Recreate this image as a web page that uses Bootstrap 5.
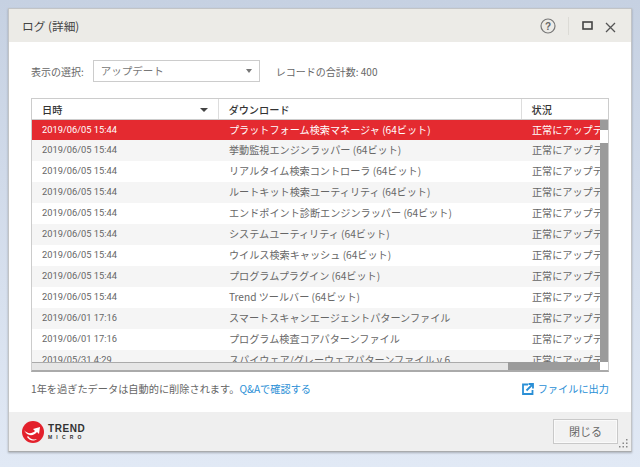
<!DOCTYPE html>
<html lang="ja">
<head>
  <meta charset="UTF-8" />
  <meta name="viewport" content="width=device-width, initial-scale=1" />
  <title>ログ (詳細)</title>
  <link href="https://cdn.jsdelivr.net/npm/bootstrap@5.3.3/dist/css/bootstrap.min.css" rel="stylesheet" />
  <style>
    html, body { height: 467px; overflow: hidden; }
    body { background: linear-gradient(#c6d1e2, #e1e9f5); font-family: "Noto Sans CJK JP", sans-serif; font-size: 10.200px; color: #666; padding: 8px 8px 15px; }
    .log-window { height: 444px; background: #fff; border: 1px solid #c2c4c6; border-bottom-color: #a9abad; box-shadow: 0 1px 2px rgba(0,0,0,.25); position: relative; }
    .log-head { height: 33px; background: #ecebe7; padding-left: 13px; padding-right: 15px; }
    .log-title { font-size: 11.700px; color: #444; }
    .tool-sep { width: 1px; height: 18px; background: #dcdbd6; margin: 0 13px 0 12px; }
    .tool-max { margin-right: 12px; }
    .tool-close { margin-top: 4px; }
    .log-body { padding: 18px 22px 0 22px; }
    .filter-row { height: 22px; margin-bottom: 16px; font-size: 10px; }
    .picker { width: 167px; height: 22px; border: 1px solid #ccc; padding: 0 7px; margin: 0 16px 0 9px; color: #777; font-size: 10.500px; }
    .caret-down { width: 0; height: 0; border-left: 4px solid transparent; border-right: 4px solid transparent; border-top: 4px solid #444; }
    .picker .caret-down { border-left-width: 3px; border-right-width: 3px; border-top-color: #777; }
    .grid-box { width: 578px; height: 274px; border: 1px solid #ccc; border-bottom: 2px solid #aaa; position: relative; overflow: hidden; }
    .grid-box table { width: 586px; table-layout: fixed; margin: 0; }
    .grid-box th, .grid-box td { height: 21px; padding: 0 0 0 10px; font-size: 10.150px; line-height: 20px; white-space: nowrap; overflow: hidden; border: 0; font-weight: 400; color: #666; }
    .grid-box td + td { padding-left: 11px; }
    .grid-box thead th { color: #333; font-size: 10.200px; font-weight: 500; background: #fff; height: 20px; line-height: 18px; border-bottom: 1px solid #ccc; }
    .grid-box thead th + th { border-left: 1px solid #ddd; padding-left: 10px; }
    .grid-box tbody tr:nth-child(even) td { background: #f5f5f5; }
    .grid-box tbody tr.picked td { background: #e42a30; color: #fff; }
    .grid-box thead th.sort-cell { padding-right: 10px; }
    .grid-box td.num { font-family: Roboto, "Noto Sans CJK JP", sans-serif; font-size: 9.300px; }
    .v-bar { position: absolute; top: 21px; right: 0; width: 8px; bottom: 0; background: #9b9b9b; }
    .v-thumb { height: 13px; margin-top: 10px; background: #fff; }
    .h-bar { position: absolute; left: 0; right: 8px; bottom: 0; height: 8px; background: #e6e6e6; border-top: 1px solid #aaa; }
    .h-thumb { position: absolute; right: 0; top: -1px; bottom: 0; width: 92px; background: #9b9b9b; }
    .corner { position: absolute; right: 0; bottom: 0; width: 8px; height: 8px; background: #fff; }
    .note-row { margin-top: 9px; }
    .note-row a { color: #2a8fd6; text-decoration: none; }
    .log-foot { position: absolute; left: 0; right: 0; bottom: 0; height: 39px; background: #efefef; padding: 0 13px; }
    .brand-word { line-height: 1; color: #333; font-family: "Liberation Sans", sans-serif; font-weight: 700; }
    .brand-word b { display: block; font-size: 10px; letter-spacing: .6px; }
    .brand-word i { display: block; font-style: normal; font-size: 5px; letter-spacing: 4.200px; margin-top: 1px; }
    .close-btn { width: 65px; height: 25px; padding: 0; border: 1px solid #c9c9c9; border-radius: 0; background: #f2f2f2; color: #666; font-size: 11px; box-shadow: inset 0 0 0 1px #fafafa; }
    .grip { position: absolute; right: 3px; bottom: 3px; }
  </style>
</head>
<body>
  <div class="log-window d-flex flex-column">
    <div class="log-head d-flex align-items-center justify-content-between">
      <span class="log-title">ログ (詳細)</span>
      <div class="d-flex align-items-center">
        <svg width="16" height="16" viewBox="0 0 16 16"><circle cx="8" cy="8" r="7" fill="none" stroke="#777" stroke-width="1.2"/><text x="8" y="11.5" text-anchor="middle" font-size="10" font-weight="700" font-family="Liberation Sans" fill="#666">?</text></svg>
        <span class="tool-sep"></span>
        <svg class="tool-max" width="11" height="9" viewBox="0 0 11 9"><rect x="1" y="1" width="9" height="7" fill="none" stroke="#444" stroke-width="1.6"/></svg>
        <svg class="tool-close" width="11" height="11" viewBox="0 0 11 11"><path d="M1 1l9 9M10 1l-9 9" stroke="#555" stroke-width="1.3" fill="none"/></svg>
      </div>
    </div>

    <div class="log-body">
      <div class="filter-row d-flex align-items-center">
        <span>表示の選択:</span>
        <div class="picker d-flex align-items-center justify-content-between">
          <span>アップデート</span>
          <span class="caret-down"></span>
        </div>
        <span>レコードの合計数: 400</span>
      </div>

      <div class="grid-box">
        <table class="table" id="logTable">
          <colgroup><col style="width:186px" /><col style="width:303px" /><col style="width:97px" /></colgroup>
          <thead>
            <tr>
              <th class="sort-cell"><div class="d-flex align-items-center justify-content-between"><span>日時</span><span class="caret-down"></span></div></th>
              <th>ダウンロード</th>
              <th>状況</th>
            </tr>
          </thead>
          <tbody id="logRows"></tbody>
        </table>
        <div class="v-bar"><div class="v-thumb"></div></div>
        <div class="h-bar"><div class="h-thumb"></div></div>
        <div class="corner"></div>
      </div>

      <div class="note-row d-flex justify-content-between align-items-center">
        <span>1年を過ぎたデータは自動的に削除されます。<a href="#">Q&amp;Aで確認する</a></span>
        <a href="#" class="d-flex align-items-center gap-1">
          <svg width="12" height="12" viewBox="0 0 12 12"><path d="M6 1.500H1V11h9.500V7" fill="none" stroke="#2a8fd6" stroke-width="1.800"/><path d="M4.500 7.500L10 2M6.500 1h4.500v4.500" fill="none" stroke="#2a8fd6" stroke-width="1.800"/></svg>
          ファイルに出力
        </a>
      </div>
    </div>

    <div class="log-foot d-flex align-items-center justify-content-between">
      <div class="d-flex align-items-center gap-1">
        <svg width="22" height="22" viewBox="0 0 22 22">
          <circle cx="11" cy="11" r="11" fill="#e3202b"/>
          <path d="M2 9c3 4 8 4 11 1l-2-2 7-2-1 7-2-2c-3 4-10 5-13-2z" fill="#fff"/>
          <path d="M6 15c2 3 5 4 9 3-4 3-8 1-10-2z" fill="#fff"/>
        </svg>
        <div class="brand-word"><b>TREND</b><i>MICRO</i></div>
      </div>
      <button type="button" class="btn close-btn">閉じる</button>
    </div>

    <svg class="grip" width="9" height="9" viewBox="0 0 9 9" fill="#888"><rect x="7" y="0" width="1.500" height="1.500"/><rect x="7" y="3.500" width="1.500" height="1.500"/><rect x="3.500" y="3.500" width="1.500" height="1.500"/><rect x="7" y="7" width="1.500" height="1.500"/><rect x="3.500" y="7" width="1.500" height="1.500"/><rect x="0" y="7" width="1.500" height="1.500"/></svg>
  </div>

  <script src="https://cdn.jsdelivr.net/npm/bootstrap@5.3.3/dist/js/bootstrap.bundle.min.js"></script>
  <script>
    const logs = [
      ['2019/06/05 15:44', 'プラットフォーム検索マネージャ (64ビット)'],
      ['2019/06/05 15:44', '挙動監視エンジンラッパー (64ビット)'],
      ['2019/06/05 15:44', 'リアルタイム検索コントローラ (64ビット)'],
      ['2019/06/05 15:44', 'ルートキット検索ユーティリティ (64ビット)'],
      ['2019/06/05 15:44', 'エンドポイント診断エンジンラッパー (64ビット)'],
      ['2019/06/05 15:44', 'システムユーティリティ (64ビット)'],
      ['2019/06/05 15:44', 'ウイルス検索キャッシュ (64ビット)'],
      ['2019/06/05 15:44', 'プログラムプラグイン (64ビット)'],
      ['2019/06/05 15:44', 'Trend ツールバー (64ビット)'],
      ['2019/06/01 17:16', 'スマートスキャンエージェントパターンファイル'],
      ['2019/06/01 17:16', 'プログラム検査コアパターンファイル'],
      ['2019/05/31 4:29', 'スパイウェア/グレーウェアパターンファイル v.6']
    ];
    document.getElementById('logRows').innerHTML = logs.map((row, i) => `
      <tr class="${i === 0 ? 'picked' : ''}">
        <td class="num">${row[0]}</td>
        <td>${row[1]}</td>
        <td>正常にアップデート</td>
      </tr>`).join('');
  </script>
</body>
</html>
